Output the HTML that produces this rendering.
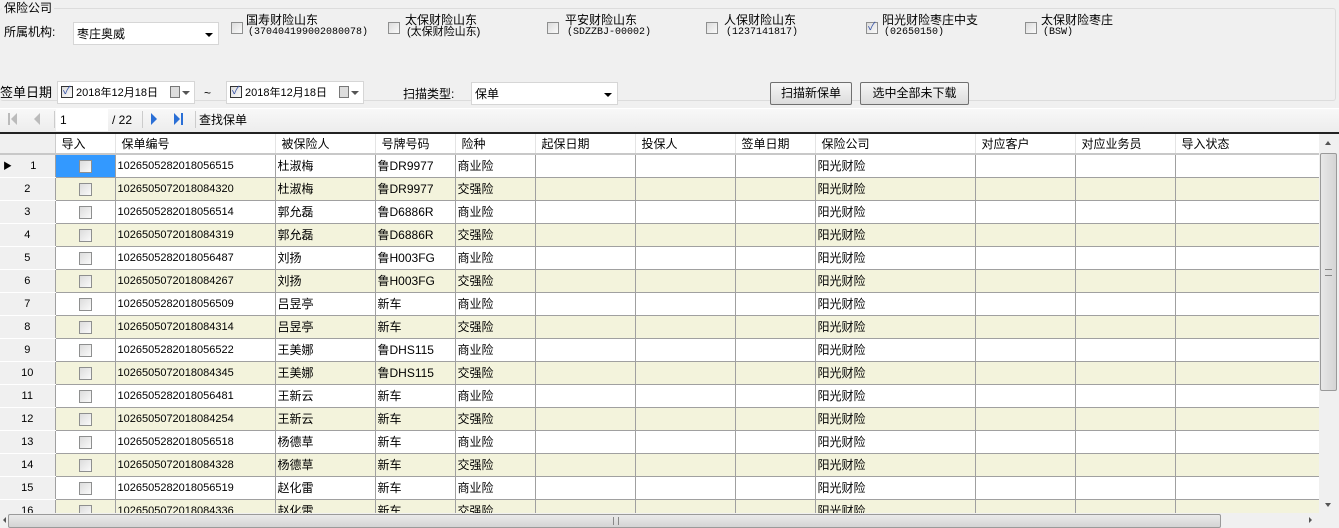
<!DOCTYPE html>
<html><head><meta charset="utf-8">
<style>
*{box-sizing:border-box;margin:0;padding:0}
body{width:1339px;height:528px;overflow:hidden;background:#f0f0f0;font-family:"Liberation Sans","Noto Sans CJK SC",sans-serif;font-size:12px;line-height:14px;color:#000;position:relative}
.a{position:absolute;white-space:nowrap}
.cb{position:absolute;width:12px;height:12px;border:1px solid #8e8f8f;background:linear-gradient(135deg,#dcdcdc,#fafafa)}
.sm{font-family:"Liberation Mono","Noto Sans CJK SC",monospace;font-size:10px;line-height:10px}
.combo{position:absolute;background:#fff;border:1px solid #d6d6d6;height:23px}
.arr{position:absolute;right:5px;top:10px;width:0;height:0;border-left:4px solid transparent;border-right:4px solid transparent;border-top:4px solid #000}
.btn{position:absolute;border:1px solid #707070;border-radius:2px;background:linear-gradient(#f6f6f6,#dcdcdc);height:23px;text-align:center;line-height:21px}
table{border-collapse:collapse;table-layout:fixed;position:absolute;left:0;top:134px}
td{border:1px solid #a0a0a0;height:23px;padding:0 0 0 2px;overflow:hidden;white-space:nowrap;font-size:12px;background:#fff}
tr.h td{height:20px;background:#fff;border:none;border-right:1px solid #e4e4e4;border-bottom:2px solid #c8c8c8;padding-left:6px}
tr.b td{background:#f3f3dc}
td.rh{background:#f0f0f0!important;border:none;border-bottom:1px solid #fff;text-align:center;padding:0;font-size:11px}
td.c{text-align:center;padding:0}
.ck{display:inline-block;width:13px;height:13px;border:1px solid #8e8f8f;background:linear-gradient(135deg,#dcdcdc,#fafafa);vertical-align:middle}
.num{font-size:11px}
</style></head><body>
<div class="a" style="left:0;top:8px;width:1336px;height:93px;border:1px solid #dcdcdc;border-left:none;border-radius:3px"></div>
<div class="a" style="left:2px;top:1px;background:#f0f0f0;padding:0 2px">保险公司</div>
<div class="a" style="left:4px;top:25px">所属机构:</div>
<div class="combo" style="left:73px;top:22px;width:146px"><span class="a" style="left:3px;top:4px">枣庄奥威</span><span class="arr"></span></div>

<div class="cb" style="left:231px;top:22px"></div><div class="a" style="left:246px;top:13px">国寿财险山东</div><div class="a sm" style="left:248px;top:28px">(370404199002080078)</div>
<div class="cb" style="left:388px;top:22px"></div><div class="a" style="left:405px;top:13px">太保财险山东</div><div class="a" style="left:407px;top:26px;font-size:11px;line-height:12px">(太保财险山东)</div>
<div class="cb" style="left:547px;top:22px"></div><div class="a" style="left:565px;top:13px">平安财险山东</div><div class="a sm" style="left:567px;top:28px">(SDZZBJ-00002)</div>
<div class="cb" style="left:706px;top:22px"></div><div class="a" style="left:724px;top:13px">人保财险山东</div><div class="a sm" style="left:726px;top:28px">(1237141817)</div>
<div class="cb" style="left:866px;top:22px"><span class="a" style="left:1px;top:-1px;color:#3a55a8;font-size:11px;line-height:11px">✓</span></div><div class="a" style="left:882px;top:13px">阳光财险枣庄中支</div><div class="a sm" style="left:884px;top:28px">(02650150)</div>
<div class="cb" style="left:1025px;top:22px"></div><div class="a" style="left:1041px;top:13px">太保财险枣庄</div><div class="a sm" style="left:1043px;top:28px">(BSW)</div>

<div class="a" style="left:0;top:86px;font-size:13px">签单日期</div>
<div class="combo" style="left:57px;top:81px;width:138px"><div class="cb" style="left:3px;top:4px;border-color:#333"><span class="a" style="left:1px;top:-1px;color:#3a55a8;font-size:11px;line-height:11px">✓</span></div><span class="a" style="left:18px;top:4px;font-size:11px">2018年12月18日</span><span class="a" style="left:112px;top:4px;width:10px;height:12px;border:1px solid #777;background:#ddd"></span><span class="arr" style="right:4px;top:9px;border-top-color:#555"></span></div>
<div class="a" style="left:204px;top:86px">~</div>
<div class="combo" style="left:226px;top:81px;width:138px"><div class="cb" style="left:3px;top:4px;border-color:#333"><span class="a" style="left:1px;top:-1px;color:#3a55a8;font-size:11px;line-height:11px">✓</span></div><span class="a" style="left:18px;top:4px;font-size:11px">2018年12月18日</span><span class="a" style="left:112px;top:4px;width:10px;height:12px;border:1px solid #777;background:#ddd"></span><span class="arr" style="right:4px;top:9px;border-top-color:#555"></span></div>
<div class="a" style="left:403px;top:87px">扫描类型:</div>
<div class="combo" style="left:471px;top:82px;width:147px"><span class="a" style="left:3px;top:4px">保单</span><span class="arr"></span></div>
<div class="btn" style="left:770px;top:82px;width:82px">扫描新保单</div>
<div class="btn" style="left:860px;top:82px;width:109px">选中全部未下载</div>

<div class="a" style="left:0;top:108px;width:1339px;height:25px;background:linear-gradient(#f8f8f8,#ececec);border-top:1px solid #fff"></div>
<div class="a" style="left:8px;top:113px;width:2px;height:12px;background:#bbb"></div>
<div class="a" style="left:11px;top:113px;border-top:6px solid transparent;border-bottom:6px solid transparent;border-right:6px solid #bbb"></div>
<div class="a" style="left:34px;top:113px;border-top:6px solid transparent;border-bottom:6px solid transparent;border-right:6px solid #bbb"></div>
<div class="a" style="left:54px;top:111px;width:1px;height:17px;background:#ccc"></div>
<div class="a" style="left:56px;top:109px;width:52px;height:22px;background:#fff"></div>
<div class="a" style="left:60px;top:113px">1</div>
<div class="a" style="left:112px;top:113px">/ 22</div>
<div class="a" style="left:142px;top:111px;width:1px;height:17px;background:#ccc"></div>
<div class="a" style="left:151px;top:113px;border-top:6px solid transparent;border-bottom:6px solid transparent;border-left:6px solid #2a6fd6"></div>
<div class="a" style="left:174px;top:113px;border-top:6px solid transparent;border-bottom:6px solid transparent;border-left:6px solid #2a6fd6"></div>
<div class="a" style="left:181px;top:113px;width:2px;height:12px;background:#2a6fd6"></div>
<div class="a" style="left:195px;top:111px;width:1px;height:17px;background:#ccc"></div>
<div class="a" style="left:199px;top:113px">查找保单</div>

<div class="a" style="left:0;top:132px;width:1339px;height:2px;background:#222"></div>

<div class="a" style="left:0;top:134px;width:1319px;height:379px;overflow:hidden">
<table style="top:0;width:1319px">
<colgroup><col style="width:55px"><col style="width:60px"><col style="width:160px"><col style="width:100px"><col style="width:80px"><col style="width:80px"><col style="width:100px"><col style="width:100px"><col style="width:80px"><col style="width:160px"><col style="width:100px"><col style="width:100px"><col style="width:144px"></colgroup>
<tr class="h"><td style="background:#f0f0f0;border-right:1px solid #ccc"></td><td>导入</td><td>保单编号</td><td>被保险人</td><td>号牌号码</td><td>险种</td><td>起保日期</td><td>投保人</td><td>签单日期</td><td>保险公司</td><td>对应客户</td><td>对应业务员</td><td>导入状态</td></tr>
<tr><td class="rh"><span style="float:left;margin-left:3px;font-size:9px">▶</span>1</td><td class="c" style="background:#3399ff"><span class="ck"></span></td><td class="num">1026505282018056515</td><td>杜淑梅</td><td>鲁DR9977</td><td>商业险</td><td></td><td></td><td></td><td>阳光财险</td><td></td><td></td><td></td></tr>
<tr class="b"><td class="rh">2</td><td class="c"><span class="ck"></span></td><td class="num">1026505072018084320</td><td>杜淑梅</td><td>鲁DR9977</td><td>交强险</td><td></td><td></td><td></td><td>阳光财险</td><td></td><td></td><td></td></tr>
<tr><td class="rh">3</td><td class="c"><span class="ck"></span></td><td class="num">1026505282018056514</td><td>郭允磊</td><td>鲁D6886R</td><td>商业险</td><td></td><td></td><td></td><td>阳光财险</td><td></td><td></td><td></td></tr>
<tr class="b"><td class="rh">4</td><td class="c"><span class="ck"></span></td><td class="num">1026505072018084319</td><td>郭允磊</td><td>鲁D6886R</td><td>交强险</td><td></td><td></td><td></td><td>阳光财险</td><td></td><td></td><td></td></tr>
<tr><td class="rh">5</td><td class="c"><span class="ck"></span></td><td class="num">1026505282018056487</td><td>刘扬</td><td>鲁H003FG</td><td>商业险</td><td></td><td></td><td></td><td>阳光财险</td><td></td><td></td><td></td></tr>
<tr class="b"><td class="rh">6</td><td class="c"><span class="ck"></span></td><td class="num">1026505072018084267</td><td>刘扬</td><td>鲁H003FG</td><td>交强险</td><td></td><td></td><td></td><td>阳光财险</td><td></td><td></td><td></td></tr>
<tr><td class="rh">7</td><td class="c"><span class="ck"></span></td><td class="num">1026505282018056509</td><td>吕昱亭</td><td>新车</td><td>商业险</td><td></td><td></td><td></td><td>阳光财险</td><td></td><td></td><td></td></tr>
<tr class="b"><td class="rh">8</td><td class="c"><span class="ck"></span></td><td class="num">1026505072018084314</td><td>吕昱亭</td><td>新车</td><td>交强险</td><td></td><td></td><td></td><td>阳光财险</td><td></td><td></td><td></td></tr>
<tr><td class="rh">9</td><td class="c"><span class="ck"></span></td><td class="num">1026505282018056522</td><td>王美娜</td><td>鲁DHS115</td><td>商业险</td><td></td><td></td><td></td><td>阳光财险</td><td></td><td></td><td></td></tr>
<tr class="b"><td class="rh">10</td><td class="c"><span class="ck"></span></td><td class="num">1026505072018084345</td><td>王美娜</td><td>鲁DHS115</td><td>交强险</td><td></td><td></td><td></td><td>阳光财险</td><td></td><td></td><td></td></tr>
<tr><td class="rh">11</td><td class="c"><span class="ck"></span></td><td class="num">1026505282018056481</td><td>王新云</td><td>新车</td><td>商业险</td><td></td><td></td><td></td><td>阳光财险</td><td></td><td></td><td></td></tr>
<tr class="b"><td class="rh">12</td><td class="c"><span class="ck"></span></td><td class="num">1026505072018084254</td><td>王新云</td><td>新车</td><td>交强险</td><td></td><td></td><td></td><td>阳光财险</td><td></td><td></td><td></td></tr>
<tr><td class="rh">13</td><td class="c"><span class="ck"></span></td><td class="num">1026505282018056518</td><td>杨德草</td><td>新车</td><td>商业险</td><td></td><td></td><td></td><td>阳光财险</td><td></td><td></td><td></td></tr>
<tr class="b"><td class="rh">14</td><td class="c"><span class="ck"></span></td><td class="num">1026505072018084328</td><td>杨德草</td><td>新车</td><td>交强险</td><td></td><td></td><td></td><td>阳光财险</td><td></td><td></td><td></td></tr>
<tr><td class="rh">15</td><td class="c"><span class="ck"></span></td><td class="num">1026505282018056519</td><td>赵化雷</td><td>新车</td><td>商业险</td><td></td><td></td><td></td><td>阳光财险</td><td></td><td></td><td></td></tr>
<tr class="b"><td class="rh">16</td><td class="c"><span class="ck"></span></td><td class="num">1026505072018084336</td><td>赵化雷</td><td>新车</td><td>交强险</td><td></td><td></td><td></td><td>阳光财险</td><td></td><td></td><td></td></tr>
</table>
</div>
<div class="a" style="left:1319px;top:134px;width:20px;height:379px;background:#f0f0f0"></div>
<div class="a" style="left:1325px;top:141px;border-left:3px solid transparent;border-right:3px solid transparent;border-bottom:4px solid #555"></div>
<div class="a" style="left:1320px;top:153px;width:17px;height:238px;border:1px solid #9a9a9a;border-radius:2px;background:linear-gradient(90deg,#e8e8e8,#d4d4d4)"></div>
<div class="a" style="left:1325px;top:269px;width:7px;height:7px;border-top:1px solid #888;border-bottom:1px solid #888"></div>
<div class="a" style="left:1325px;top:503px;border-left:3px solid transparent;border-right:3px solid transparent;border-top:4px solid #555"></div>
<div class="a" style="left:0;top:513px;width:1339px;height:15px;background:#f0f0f0"></div>
<div class="a" style="left:3px;top:517px;border-top:3px solid transparent;border-bottom:3px solid transparent;border-right:3px solid #555"></div>
<div class="a" style="left:8px;top:514px;width:1213px;height:14px;border:1px solid #9a9a9a;border-radius:2px;background:linear-gradient(#eaeaea,#d4d4d4)"></div>
<div class="a" style="left:613px;top:517px;width:6px;height:8px;border-left:1px solid #888;border-right:1px solid #888"></div>
<div class="a" style="left:1309px;top:517px;border-top:3px solid transparent;border-bottom:3px solid transparent;border-left:3px solid #555"></div>
</body></html>
